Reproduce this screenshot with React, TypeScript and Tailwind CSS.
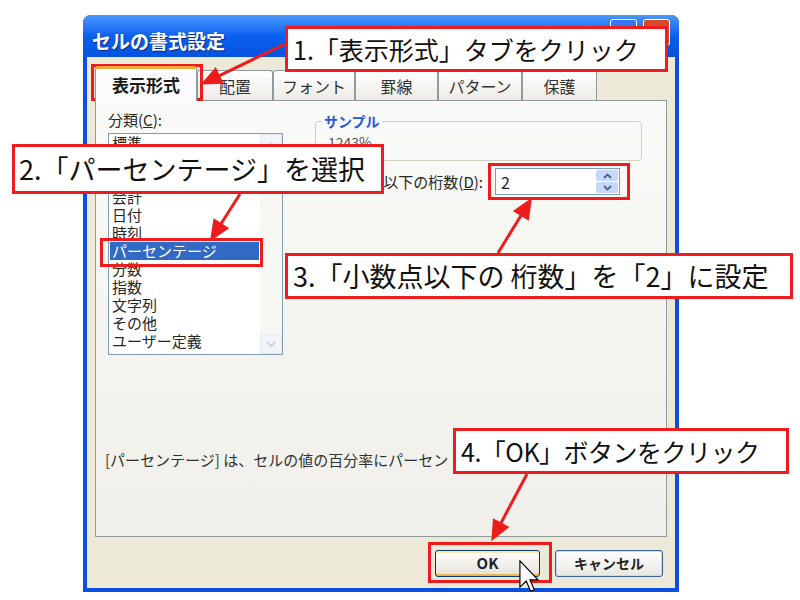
const categories = [
  "標準",
  "数値",
  "通貨",
  "会計",
  "日付",
  "時刻",
  "パーセンテージ",
  "分数",
  "指数",
  "文字列",
  "その他",
  "ユーザー定義",
];

const tabs = [
  { label: "表示形式", width: "w-[102px]", active: true },
  { label: "配置", width: "w-[76px]", active: false },
  { label: "フォント", width: "w-[82px]", active: false },
  { label: "罫線", width: "w-[83px]", active: false },
  { label: "パターン", width: "w-[84px]", active: false },
  { label: "保護", width: "w-[75px]", active: false },
];

function Arrows() {
  return (
    <svg className="pointer-events-none absolute left-0 top-0" width="800" height="600">
      <g stroke="#EE1C1C" strokeWidth="3" fill="#EE1C1C">
        <line x1="285" y1="44" x2="218.4" y2="76.1" />
        <polygon points="204,83 215.4,69.8 221.4,82.4" />
        <line x1="240" y1="194" x2="220.6" y2="224.5" />
        <polygon points="212,238 214.7,220.7 226.5,228.3" />
        <line x1="498" y1="253" x2="521.6" y2="214.6" />
        <polygon points="530,201 527.6,218.3 515.6,210.9" />
        <line x1="527" y1="474" x2="500.5" y2="523.9" />
        <polygon points="493,538 494.3,520.6 506.7,527.2" />
      </g>
    </svg>
  );
}

export default function App() {
  return (
    <div className="relative h-[600px] w-[800px] overflow-hidden bg-white font-['Noto_Sans_CJK_JP',sans-serif] text-[#262626]">
      {/* Dialog window */}
      <div className="ml-[83px] mt-[15px] flex h-[577px] w-[596px] flex-col overflow-hidden rounded-t-[8px] bg-[#0A4FE3]">
        {/* Title bar */}
        <div className="flex h-[42px] shrink-0 items-start justify-between bg-linear-to-b from-[#4A97FC] via-[#0A5FEF] to-[#0552E0] pl-[9px] pr-[9px]">
          <span className="mt-[14px] text-[19px] font-bold leading-[24px] text-white [text-shadow:1px_1px_0_#0B2A8A]">
            セルの書式設定
          </span>
          <div className="mt-[4px] flex gap-[6px]">
            <div className="h-[27px] w-[27px] rounded-[3px] border border-white bg-[#3776F2]" />
            <div className="h-[27px] w-[27px] rounded-[3px] border border-white bg-[#D9492A]" />
          </div>
        </div>

        {/* Body */}
        <div className="mx-[4px] mb-[4px] flex flex-1 flex-col bg-[#ECE9D8] px-[8px] pt-[9px]">
          {/* Tabs */}
          <div className="flex h-[34px] items-end">
            {tabs.map((tab) =>
              tab.active ? (
                <div
                  key={tab.label}
                  className={`${tab.width} relative z-10 -mb-px flex h-[35px] items-center justify-center rounded-t-[3px] border border-b-0 border-[#919B9C] border-t-[3px] border-t-[#F4A93C] bg-[#FCFCFE] text-[17px] font-bold text-[#1a1a1a]`}
                >
                  {tab.label}
                </div>
              ) : (
                <div
                  key={tab.label}
                  className={`${tab.width} flex h-[30px] items-center justify-center rounded-t-[3px] border border-b-0 border-[#919B9C] bg-linear-to-b from-white to-[#ECEBE6] text-[16px] text-[#333]`}
                >
                  {tab.label}
                </div>
              )
            )}
          </div>

          {/* Tab panel */}
          <div className="flex h-[437px] flex-col border border-[#919B9C] bg-linear-to-b from-[#FAFAF8] to-[#F0EFEA] pl-[9px] pt-[10px]">
            <div className="flex">
              {/* Category list */}
              <div className="ml-[3px] w-[175px]">
                <div className="h-[18px] text-[15px] leading-[18px]">
                  分類(<span className="underline">C</span>):
                </div>
                <div className="mt-[4px] flex h-[222px] border border-[#7F9DB9] bg-white">
                  <div className="flex-1 px-[1px]">
                    {categories.map((c) => (
                      <div
                        key={c}
                        className={
                          c === "パーセンテージ"
                            ? "h-[18px] bg-[#316AC5] pl-[2px] text-[15px] leading-[18px] text-white"
                            : "h-[18px] pl-[2px] text-[15px] leading-[18px]"
                        }
                      >
                        {c}
                      </div>
                    ))}
                  </div>
                  <div className="flex w-[22px] flex-col justify-between bg-[#F7F7F4]">
                    <div className="flex h-[20px] items-center justify-center rounded-[2px] border border-[#E6E9F0] bg-[#F3F4F8]">
                      <svg width="10" height="7" viewBox="0 0 10 7">
                        <path d="M1 6 L5 2 L9 6" stroke="#D4DAE4" strokeWidth="1.6" fill="none" />
                      </svg>
                    </div>
                    <div className="flex h-[20px] items-center justify-center rounded-[2px] border border-[#E6E9F0] bg-[#F3F4F8]">
                      <svg width="10" height="7" viewBox="0 0 10 7">
                        <path d="M1 1 L5 5 L9 1" stroke="#C2C9D6" strokeWidth="1.6" fill="none" />
                      </svg>
                    </div>
                  </div>
                </div>
              </div>

              {/* Right side */}
              <div className="ml-[32px] w-[327px]">
                <div className="relative mt-[10px] h-[40px] rounded-[4px] border border-[#D0D0BF]">
                  <span className="absolute -top-[10px] left-[6px] bg-[#FAFAF8] px-[2px] text-[14px] font-bold leading-[18px] text-[#1F5BDB]">
                    サンプル
                  </span>
                  <div className="pl-[12px] pt-[12px] text-[14px] leading-[16px] text-[#555]">1243%</div>
                </div>
                <div className="mt-[7px] flex h-[27px] items-center justify-end pr-[22px]">
                  <span className="text-[15px] leading-[18px]">
                    小数点以下の桁数(<span className="underline">D</span>):
                  </span>
                  <div className="ml-[12px] flex h-[27px] w-[125px] items-center border border-[#7F9DB9] bg-white">
                    <span className="flex-1 pl-[5px] text-[16px] leading-[18px]">2</span>
                    <div className="mr-[1px] flex h-[23px] w-[22px] flex-col gap-px">
                      <div className="flex flex-1 items-center justify-center rounded-[2px] bg-[#C8D8FB]">
                        <svg width="9" height="6" viewBox="0 0 9 6">
                          <path d="M1 5 L4.5 1.5 L8 5" stroke="#4D6185" strokeWidth="1.8" fill="none" />
                        </svg>
                      </div>
                      <div className="flex flex-1 items-center justify-center rounded-[2px] bg-[#C8D8FB]">
                        <svg width="9" height="6" viewBox="0 0 9 6">
                          <path d="M1 1 L4.5 4.5 L8 1" stroke="#4D6185" strokeWidth="1.8" fill="none" />
                        </svg>
                      </div>
                    </div>
                  </div>
                </div>
              </div>
            </div>

            <div className="mt-[96px] whitespace-nowrap text-[15px] leading-[18px] text-[#333]">
              [パーセンテージ] は、セルの値の百分率にパーセント記号を付けて表示します。
            </div>
          </div>

          {/* Buttons */}
          <div className="mt-[13px] flex justify-end gap-[15px] pr-[4px]">
            <button className="h-[27px] w-[105px] rounded-[3px] border border-[#003C74] bg-linear-to-b from-white to-[#E4E2D8] text-[15px] font-bold text-[#222] shadow-[inset_0_-2px_0_#F2B448,inset_0_2px_0_#FFE9B0]">
              OK
            </button>
            <button className="h-[27px] w-[108px] rounded-[3px] border border-[#3C5F95] bg-linear-to-b from-white to-[#E8E7E0] text-[14px] font-bold text-[#222] shadow-[inset_0_0_0_1px_#C9DAF8]">
              キャンセル
            </button>
          </div>
        </div>
      </div>

      {/* Red highlight frames */}
      <div className="absolute left-[91px] top-[64px] h-[37px] w-[112px] border-[3px] border-[#EE1C1C]" />
      <div className="absolute left-[100px] top-[238px] h-[29px] w-[163px] border-[3px] border-[#EE1C1C]" />
      <div className="absolute left-[488px] top-[163px] h-[37px] w-[142px] border-[3px] border-[#EE1C1C]" />
      <div className="absolute left-[428px] top-[542px] h-[41px] w-[124px] border-[3px] border-[#EE1C1C]" />

      {/* Callouts */}
      <div className="absolute left-[285px] top-[26px] h-[46px] w-[383px] border-[3px] border-[#EE1C1C] bg-white pl-[5px] text-[25px] leading-[40px] text-[#111]">
        1.「表示形式」タブをクリック
      </div>
      <div className="absolute left-[12px] top-[144px] h-[50px] w-[372px] border-[3px] border-[#EE1C1C] bg-white pl-[4px] text-[27px] leading-[44px] text-[#111]">
        2.「パーセンテージ」を選択
      </div>
      <div className="absolute left-[285px] top-[253px] h-[46px] w-[508px] border-[3px] border-[#EE1C1C] bg-white pl-[5px] text-[27px] leading-[40px] text-[#111]">
        3.「小数点以下の 桁数」を「2」に設定
      </div>
      <div className="absolute left-[453px] top-[428px] h-[46px] w-[336px] border-[3px] border-[#EE1C1C] bg-white pl-[5px] text-[25px] leading-[40px] tracking-[-0.5px] text-[#111]">
        4.「OK」ボタンをクリック
      </div>

      <Arrows />

      {/* Mouse cursor */}
      <svg className="pointer-events-none absolute left-[519px] top-[560px]" width="20" height="33" viewBox="0 0 12 20">
        <path d="M0.5 0.5 L0.5 16.5 L4.3 12.8 L7 19 L9.2 18 L6.6 12 L11.5 12 Z" fill="white" stroke="black" strokeWidth="0.7" />
      </svg>
    </div>
  );
}
